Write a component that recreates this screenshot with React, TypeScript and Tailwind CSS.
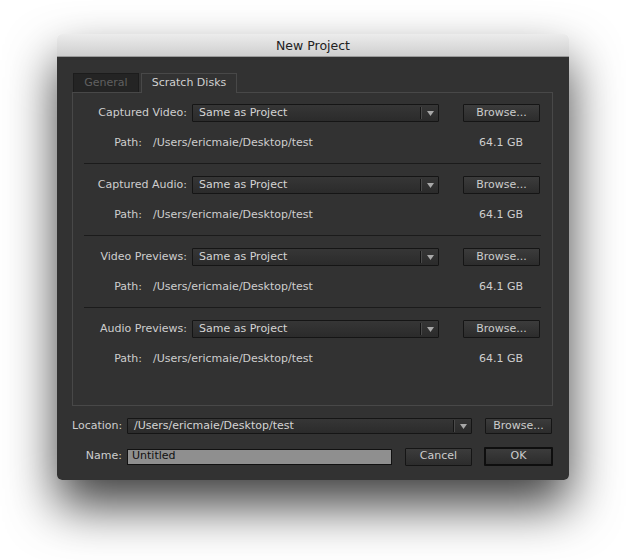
import React from "react";

const font = { fontFamily: '"DejaVu Sans", "Liberation Sans", sans-serif' };

const Dropdown: React.FC<{ value: string; width: string }> = ({ value, width }) => (
  <div
    className={`${width} h-[18px] flex items-center border border-[#151515] bg-gradient-to-b from-[#363636] to-[#2b2b2b] rounded-[1px]`}
  >
    <span className="flex-1 pl-[6px] text-[#d4d4d4] truncate">{value}</span>
    <div className="h-[12px] w-[1px] bg-[#151515]" />
    <div className="h-[12px] w-[1px] bg-[#4a4a4a]" />
    <div className="w-[16px] flex justify-center">
      <svg width="7" height="5" viewBox="0 0 7 5">
        <path d="M0 0 H7 L3.5 5 Z" fill="#a8a8a8" />
      </svg>
    </div>
  </div>
);

const Button: React.FC<{ label: string; width: string; primary?: boolean }> = ({
  label,
  width,
  primary,
}) => (
  <div
    className={`${width} ${
      primary ? "h-[19px] border-2 border-[#0e0e0e]" : "h-[18px] border border-[#151515]"
    } flex items-center justify-center bg-gradient-to-b from-[#3c3c3c] to-[#2c2c2c] text-[#cccccc] rounded-[1px]`}
  >
    {label}
  </div>
);

const sections = ["Captured Video:", "Captured Audio:", "Video Previews:", "Audio Previews:"];

const App: React.FC = () => {
  return (
    <div className="w-[626px] h-[560px] bg-white pt-[34px] pl-[57px]" style={font}>
      <div className="w-[512px] h-[446px] rounded-[5px] shadow-[0_26px_50px_rgba(0,0,0,0.75)] flex flex-col overflow-hidden text-[11px]">
        {/* Title bar */}
        <div className="h-[23px] shrink-0 flex items-center justify-center pt-[2px] bg-gradient-to-b from-[#ececec] to-[#cfcfcf] border-b border-[#9a9a9a] text-[12.5px] text-[#222]">
          New Project
        </div>

        {/* Body */}
        <div className="flex-1 bg-[#323232] pt-[16px] pl-[15px] pr-[16px] flex flex-col">
          {/* Tabs */}
          <div className="flex h-[19px] items-end">
            <div className="w-[66px] h-[19px] ml-[1px] flex items-center justify-center bg-[#242424] border border-[#1c1c1c] border-b-0 text-[#606060]">
              General
            </div>
            <div className="w-[96px] h-[20px] ml-[2px] flex items-center justify-center bg-[#323232] border border-[#484848] border-b-0 text-[#d0d0d0] relative top-[1px]">
              Scratch Disks
            </div>
          </div>

          {/* Panel */}
          <div className="h-[314px] border border-[#484848] px-[11px]">
            {sections.map((label, i) => (
              <div
                key={label}
                className={`${i === 0 ? "pt-[11px]" : "pt-[12px]"} ${
                  i < 3 ? "pb-[13px] border-b border-[#1b1b1b]" : ""
                }`}
              >
                <div className="flex items-center h-[18px]">
                  <span className="w-[103px] text-right text-[#cecece] whitespace-nowrap">{label}</span>
                  <div className="ml-[5px]">
                    <Dropdown value="Same as Project" width="w-[247px]" />
                  </div>
                  <div className="ml-[24px]">
                    <Button label="Browse..." width="w-[77px]" />
                  </div>
                </div>
                <div className="flex items-center h-[14px] mt-[14px] text-[#cecece]">
                  <span className="w-[58px] text-right">Path:</span>
                  <span className="ml-[11px] flex-1">/Users/ericmaie/Desktop/test</span>
                  <span className="pr-[18px]">64.1 GB</span>
                </div>
              </div>
            ))}
          </div>

          {/* Location */}
          <div className="flex items-center h-[16px] mt-[12px]">
            <span className="w-[50px] text-right text-[#cecece] whitespace-nowrap">Location:</span>
            <div className="ml-[5px]">
              <Dropdown value="/Users/ericmaie/Desktop/test" width="w-[345px] !h-[16px]" />
            </div>
            <div className="ml-[13px]">
              <Button label="Browse..." width="w-[67px] !h-[16px]" />
            </div>
          </div>

          {/* Name */}
          <div className="flex items-center h-[19px] mt-[13px]">
            <span className="w-[50px] text-right text-[#cecece]">Name:</span>
            <div className="ml-[5px] w-[265px] h-[16px] bg-[#8f8f8f] border border-[#111] flex items-center pl-[4px] text-[#111]">
              Untitled
            </div>
            <div className="ml-[13px]">
              <Button label="Cancel" width="w-[67px] !h-[18px]" />
            </div>
            <div className="ml-[12px]">
              <Button label="OK" width="w-[69px]" primary />
            </div>
          </div>
        </div>
      </div>
    </div>
  );
};

export default App;
